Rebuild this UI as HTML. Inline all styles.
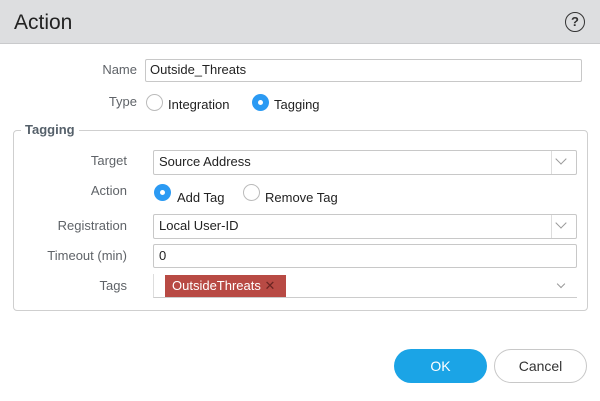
<!DOCTYPE html>
<html><head><style>
*{box-sizing:border-box;margin:0;padding:0}
body{width:600px;height:401px;background:#fff;font-family:"Liberation Sans",sans-serif;position:relative;overflow:hidden;color:#333}
.a{position:absolute}
.hdr{left:0;top:0;width:600px;height:44px;background:#dddee0;border-bottom:1px solid #c9cacc}
.lbl{font-size:13px;color:#5f6368;text-align:right}
.txt{font-size:13px;color:#222}
.inp{border:1px solid #c8c8c8;border-radius:2px;background:#fff}
.rad{width:17px;height:17px;border-radius:50%;border:1px solid #bbb;background:#fff}
.on{background:#2b9af3;border:none}
.on::after{content:"";position:absolute;left:6px;top:6px;width:5px;height:5px;border-radius:50%;background:#fff}
.arr{width:26px;border-left:1px solid #ddd}
</style></head><body>
<div class="a hdr"></div>
<div class="a" style="left:14px;top:11px;font-size:21px;color:#222">Action</div>
<div class="a" style="left:565px;top:12px;width:20px;height:20px;border:1.5px solid #333;border-radius:50%;font-size:13px;font-weight:bold;text-align:center;line-height:17px;color:#333">?</div>

<div class="a lbl" style="left:60px;width:77px;top:62px">Name</div>
<div class="a inp" style="left:145px;top:59px;width:437px;height:23px"></div>
<div class="a txt" style="left:150px;top:62px">Outside_Threats</div>

<div class="a lbl" style="left:60px;width:77px;top:94px">Type</div>
<div class="a rad" style="left:146px;top:94px"></div>
<div class="a txt" style="left:168px;top:97px">Integration</div>
<div class="a rad on" style="left:252px;top:94px"></div>
<div class="a txt" style="left:274px;top:97px">Tagging</div>

<div class="a" style="left:13px;top:130px;width:575px;height:181px;border:1px solid #cfcfcf;border-radius:4px"></div>
<div class="a" style="left:21px;top:122px;background:#fff;padding:0 4px;font-size:13px;font-weight:bold;color:#55606a">Tagging</div>

<div class="a lbl" style="left:40px;width:87px;top:153px">Target</div>
<div class="a inp" style="left:153px;top:150px;width:424px;height:25px"></div>
<div class="a arr" style="left:551px;top:151px;height:23px"></div>
<div class="a" style="left:557px;top:155px;width:8px;height:8px;border-right:1px solid #999;border-bottom:1px solid #999;transform:rotate(45deg)"></div>
<div class="a txt" style="left:159px;top:154px">Source Address</div>

<div class="a lbl" style="left:40px;width:87px;top:183px">Action</div>
<div class="a rad on" style="left:154px;top:184px"></div>
<div class="a txt" style="left:177px;top:190px">Add Tag</div>
<div class="a rad" style="left:243px;top:184px"></div>
<div class="a txt" style="left:265px;top:190px">Remove Tag</div>

<div class="a lbl" style="left:40px;width:87px;top:218px">Registration</div>
<div class="a inp" style="left:153px;top:214px;width:424px;height:25px"></div>
<div class="a arr" style="left:551px;top:215px;height:23px"></div>
<div class="a" style="left:557px;top:219px;width:8px;height:8px;border-right:1px solid #999;border-bottom:1px solid #999;transform:rotate(45deg)"></div>
<div class="a txt" style="left:159px;top:218px">Local User-ID</div>

<div class="a lbl" style="left:30px;width:97px;top:248px">Timeout (min)</div>
<div class="a inp" style="left:153px;top:244px;width:424px;height:24px"></div>
<div class="a txt" style="left:159px;top:248px">0</div>

<div class="a lbl" style="left:40px;width:87px;top:278px">Tags</div>
<div class="a" style="left:153px;top:274px;width:424px;height:24px;border-left:1px solid #ddd;border-bottom:1px solid #ccc"></div>
<div class="a" style="left:165px;top:275px;width:121px;height:22px;background:#b84a44;color:#fff;font-size:13px;line-height:22px;padding-left:7px">OutsideThreats <span style="color:#6b2522">✕</span></div>
<div class="a" style="left:558px;top:281px;width:6px;height:6px;border-right:1px solid #999;border-bottom:1px solid #999;transform:rotate(45deg)"></div>

<div class="a" style="left:394px;top:349px;width:93px;height:34px;border-radius:17px;background:#1ba4e6;color:#fff;font-size:14px;text-align:center;line-height:34px">OK</div>
<div class="a" style="left:494px;top:349px;width:93px;height:34px;border-radius:17px;border:1px solid #c8c8c8;color:#333;font-size:14px;text-align:center;line-height:32px">Cancel</div>
</body></html>
